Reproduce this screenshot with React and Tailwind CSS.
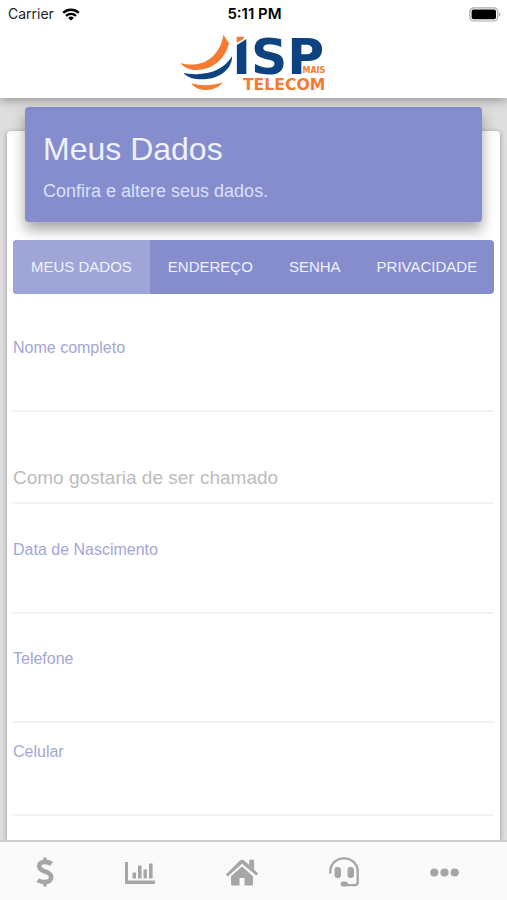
import React from "react";

const tabs = ["MEUS DADOS", "ENDEREÇO", "SENHA", "PRIVACIDADE"];

function StatusBar() {
  return (
    <div className="grid grid-cols-3 items-center pl-2 pr-1.5 h-7 font-['Inter',sans-serif] text-[14px] leading-5 text-[#222]">
      <div className="flex items-center gap-2">
        <span>Carrier</span>
        <svg className="w-[18px] h-[13px]" viewBox="0 0 18 13" fill="none" stroke="#000" strokeWidth="2.3">
          <path d="M1.2 4.9a11.2 11.2 0 0 1 15.6 0" />
          <path d="M4 7.9a7.2 7.2 0 0 1 10 0" />
          <path d="M9 12.6 6.2 9.9a4 4 0 0 1 5.6 0z" fill="#000" stroke="none" />
        </svg>
      </div>
      <span className="text-center text-[15px] font-semibold text-black">5:11 PM</span>
      <svg className="justify-self-end w-8 h-[15px]" viewBox="0 0 32 15">
        <rect x="0.8" y="0.8" width="28" height="13.2" rx="4" fill="#fff" stroke="#aaa" strokeWidth="1.2" />
        <rect x="2.6" y="2.6" width="24.4" height="9.6" rx="2" fill="#000" />
        <path d="M30.3 5.2c1.5.7 1.5 3.7 0 4.4z" fill="#999" />
      </svg>
    </div>
  );
}

function Logo() {
  return (
    <svg className="w-[147px] h-[58px] overflow-visible" viewBox="30 102 441 174" role="img" aria-label="ISP Mais Telecom">
      <path d="M160 104 177 130C166 178 126 212 74 210 54 208 40 201 32 189 100 208 152 166 160 104Z" fill="#f47b30" />
      <path d="M186 169C187 205 152 236 102 238 72 239 51 232 41 219 102 230 158 216 186 169Z" fill="#0b427f" />
      <path d="M64 250C92 258 126 258 159 247 145 264 125 271 104 270 85 269 72 262 64 250Z" fill="#f47b30" />
      <text x="187" y="221" fontFamily="DejaVu Sans, sans-serif" fontWeight="700" fontSize="151" fill="#0b427f">ISP</text>
      <path d="M192 100h46v12l-46 28z" fill="#fff" />
      <path d="M200 110h24l-7 10-17 8z" fill="#f47b30" />
      <text x="466" y="219" textAnchor="end" fontFamily="DejaVu Sans, sans-serif" fontWeight="700" fontSize="24" fill="#f47b30">MAIS</text>
      <text x="466" y="270" textAnchor="end" fontFamily="DejaVu Sans, sans-serif" fontWeight="700" fontSize="47" fill="#f47b30">TELECOM</text>
    </svg>
  );
}

function Field({ id, label, type = "text", className }) {
  return (
    <div className={className}>
      <label htmlFor={id} className="block text-[16px] leading-5 text-[#a3a6d8]">{label}</label>
      <input id={id} type={type} className="block w-full h-[54px] border-b-2 border-[#f2f2f2] bg-transparent text-[18px] text-[#fcfcfc] outline-none" />
    </div>
  );
}

function NavButton({ label, children }) {
  return (
    <button type="button" aria-label={label} className="flex h-full items-center text-[#a6a6a6]">
      {children}
    </button>
  );
}

function BottomNav() {
  return (
    <nav className="relative z-10 flex shrink-0 h-[60px] items-center justify-between border-t-2 border-[#d0d0d0] bg-[#fafafa] pl-9 pr-12 pt-[2px]">
      <NavButton label="Financeiro">
        <svg className="w-[18px] h-[30px]" viewBox="0 0 18 30" fill="none" stroke="currentColor" strokeWidth="4.6">
          <path d="M15.8 6.8C13.4 5.4 11 4.9 8.6 4.9 5.3 4.9 3.1 6.6 3.1 9.2c0 6.3 12.1 4.3 12.1 10.9 0 3.2-2.8 5-6.3 5-2.6 0-5-.6-7.1-2" />
          <path d="M9 .5v5M9 24.5v5" strokeWidth="3.4" />
        </svg>
      </NavButton>
      <NavButton label="Consumo">
        <svg className="w-[30px] h-[23px]" viewBox="0 0 30 23" fill="currentColor">
          <path d="M0 1h3v18.5h27V23H0z" />
          <path d="M7.5 11.5h3.6v6H7.5zM13 4.5h3.6v13H13zM18.5 8.5h3.4v9h-3.4zM24 2.5h3.6v15H24z" />
        </svg>
      </NavButton>
      <NavButton label="Início">
        <svg className="w-8 h-[27px]" viewBox="0 0 32 27" fill="currentColor">
          <path d="M16 .8c1 0 1.7.3 2.4.9l4.8 4.4V1.6c0-.5.4-.8.8-.8h3.2c.5 0 .9.3.9.8v9l3.5 3.3c.4.4.4.8.1 1.2l-.8.9c-.3.4-.8.4-1.2 0L16 4.8 2.3 17c-.4.4-.9.4-1.2 0l-.8-.9c-.3-.4-.3-.8.1-1.2L13.6 1.7c.7-.6 1.4-.9 2.4-.9Z" />
          <path d="m16 7.5 11 9.8v7.8c0 .8-.5 1.3-1.3 1.3h-7.2v-7.4h-5v7.4H6.3c-.8 0-1.3-.5-1.3-1.3v-7.8z" />
        </svg>
      </NavButton>
      <NavButton label="Suporte">
        <svg className="w-[30px] h-[30px]" viewBox="0 0 30 30">
          <path d="M1.3 16.5V14.5C1.3 7 7.2 1.3 15 1.3S28.7 7 28.7 14.5V25c0 2-1.2 3.2-3.2 3.2H15" fill="none" stroke="currentColor" strokeWidth="2.3" />
          <rect x="5.5" y="10" width="6.5" height="11" rx="3" fill="currentColor" />
          <rect x="18.5" y="10" width="6.5" height="11" rx="3" fill="currentColor" />
          <rect x="11.5" y="24.5" width="7.5" height="5" rx="2.5" fill="currentColor" />
        </svg>
      </NavButton>
      <NavButton label="Mais opções">
        <svg className="w-[29px] h-[9px]" viewBox="0 0 29 9" fill="currentColor">
          <circle cx="4.3" cy="4.5" r="4.1" />
          <circle cx="14.5" cy="4.5" r="4.1" />
          <circle cx="24.7" cy="4.5" r="4.1" />
        </svg>
      </NavButton>
    </nav>
  );
}

export default function App() {
  return (
    <div className="flex h-screen flex-col overflow-hidden bg-[#dedede] font-['Liberation_Sans',Arial,sans-serif]">
      <header className="relative z-10 shrink-0 bg-white pb-1.5 shadow-[0_2px_10px_rgba(0,0,0,0.35)]">
        <StatusBar />
        <div className="flex justify-center pt-1.5">
          <Logo />
        </div>
      </header>

      <main className="flex min-h-0 flex-1 flex-col px-[7px]">
        <section className="mt-[33px] flex-1 rounded-t bg-white px-1.5 shadow-[0_1px_5px_rgba(0,0,0,0.35)]">
          <div className="mx-3 -mt-6 rounded bg-[#868dcd] px-[18px] pt-[22px] pb-[18px] text-[#eef2ff] shadow-[0_8px_14px_rgba(0,0,0,0.35)]">
            <h1 className="text-[32px] leading-10">Meus Dados</h1>
            <p className="mt-2.5 text-[18px] leading-[25px] text-[#d9e0fb]">Confira e altere seus dados.</p>
          </div>

          <div role="tablist" className="mt-[18px] flex overflow-hidden rounded bg-[#868dcd]">
            {tabs.map((tab, i) => (
              <button
                key={tab}
                type="button"
                role="tab"
                aria-selected={i === 0}
                className={
                  i === 0
                    ? "h-[54px] shrink-0 whitespace-nowrap bg-[#a0a5d8] px-[18px] text-[15px] leading-5 text-[#eef2ff]"
                    : "h-[54px] shrink-0 whitespace-nowrap px-[18px] text-[15px] leading-5 text-[#eef2ff]"
                }
              >
                {tab}
              </button>
            ))}
          </div>

          <form>
            <Field id="nome" label="Nome completo" className="mt-11" />
            <div className="mt-10">
              <input
                id="apelido"
                aria-label="Como gostaria de ser chamado"
                placeholder="Como gostaria de ser chamado"
                className="block h-[52px] w-full border-b-2 border-[#f2f2f2] bg-transparent pt-[2px] text-[19px] text-[#666] outline-none placeholder:text-[#bcbcbc]"
              />
            </div>
            <Field id="nascimento" label="Data de Nascimento" className="mt-9" />
            <Field id="telefone" label="Telefone" type="tel" className="mt-[35px]" />
            <Field id="celular" label="Celular" type="tel" className="mt-[19px]" />
          </form>
        </section>
      </main>

      <BottomNav />
    </div>
  );
}
